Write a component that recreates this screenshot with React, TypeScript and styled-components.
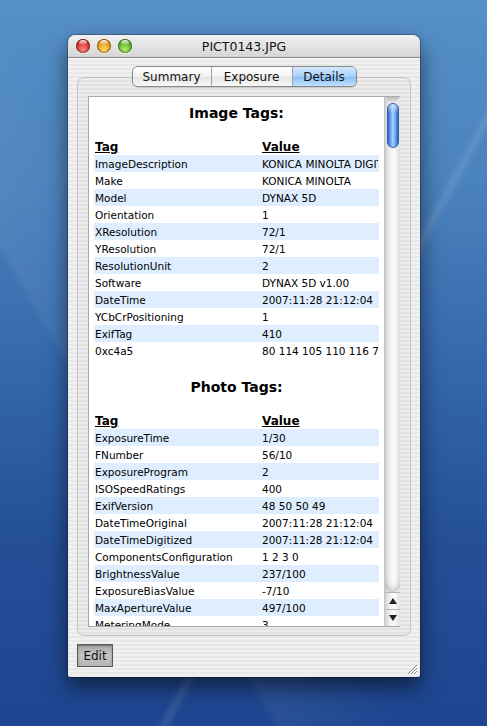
import React from 'react'
import styled, { createGlobalStyle } from 'styled-components'

const GlobalStyle = createGlobalStyle`
  * { box-sizing: border-box; }
  html, body { margin: 0; padding: 0; }
  body {
    font-family: "Lucida Grande", "DejaVu Sans", sans-serif;
    color: #000;
  }
`

const Desktop = styled.div`
  position: relative;
  min-height: 726px;
  padding: 35px 0 0 68px;
  overflow: hidden;
  background:
    linear-gradient(118deg, transparent 62%, rgba(255, 255, 255, 0.1) 63%, transparent 64%),
    linear-gradient(60deg, transparent 30%, rgba(255, 255, 255, 0.06) 31%, transparent 45%),
    linear-gradient(180deg, #5690c8 0%, #4a82bd 25%, #3468ad 50%, #244f97 75%, #1d4590 100%);
`

const Window = styled.div`
  position: relative;
  width: 352px;
  height: 642px;
  display: flex;
  flex-direction: column;
  border-radius: 7px 7px 2px 2px;
  overflow: hidden;
  box-shadow: 0 10px 22px rgba(0, 0, 0, 0.55), 0 0 0 1px rgba(0, 0, 0, 0.25);
`

const TitleBar = styled.div`
  flex-shrink: 0;
  height: 23px;
  display: grid;
  grid-template-columns: 1fr auto 1fr;
  align-items: center;
  padding: 0 8px;
  background:
    repeating-linear-gradient(180deg, rgba(255, 255, 255, 0.25) 0 1px, transparent 1px 2px),
    linear-gradient(180deg, #eeeeee 0%, #dedede 55%, #cfcfcf 100%);
  border-bottom: 1px solid #8c8c8c;
`

const Lights = styled.div`
  display: flex;
  gap: 7px;
`

const Light = styled.span<{ $c: string; $d: string }>`
  position: relative;
  width: 14px;
  height: 14px;
  border-radius: 50%;
  background: radial-gradient(circle at 50% 75%, ${p => p.$c} 0%, ${p => p.$d} 75%);
  box-shadow: inset 0 0 0 1px rgba(0, 0, 0, 0.35), 0 1px 1px rgba(255, 255, 255, 0.6);

  &::after {
    content: '';
    position: absolute;
    left: 3px;
    top: 1px;
    width: 8px;
    height: 5px;
    border-radius: 50%;
    background: linear-gradient(180deg, rgba(255, 255, 255, 0.9), rgba(255, 255, 255, 0.1));
  }
`

const Title = styled.div`
  font-size: 12.5px;
  color: #111;
  white-space: nowrap;
`

const Body = styled.div`
  flex: 1;
  min-height: 0;
  display: flex;
  flex-direction: column;
  padding: 8px 9px 10px;
  background: repeating-linear-gradient(180deg, #f1f1f1 0 2px, #e8e8e8 2px 4px);
`

const TabBar = styled.div`
  flex-shrink: 0;
  position: relative;
  z-index: 1;
  align-self: center;
  display: flex;
  height: 21px;
  border: 1px solid #888;
  border-radius: 6px;
  overflow: hidden;
  box-shadow: 0 1px 1px rgba(0, 0, 0, 0.15);
`

const Tab = styled.div<{ $active?: boolean; $w: number }>`
  width: ${p => p.$w}px;
  display: flex;
  align-items: center;
  justify-content: center;
  font-size: 12px;
  color: #111;
  border-left: 1px solid #a4a4a4;
  background: ${p =>
    p.$active
      ? 'linear-gradient(180deg, #d4e9fd 0%, #aed4fa 45%, #8cc1f6 55%, #bfe1fe 100%)'
      : 'linear-gradient(180deg, #ffffff 0%, #f4f4f4 45%, #e6e6e6 55%, #f7f7f7 100%)'};
  &:first-child {
    border-left: none;
  }
`

const GroupBox = styled.div`
  flex: 1;
  min-height: 0;
  margin-top: -10px;
  display: flex;
  padding: 18px 10px 8px;
  border: 1px solid #c2c2c2;
  border-radius: 7px;
  background: rgba(0, 0, 0, 0.025);
`

const Panel = styled.div`
  flex: 1;
  min-height: 0;
  display: flex;
  border: 1px solid #a9a9a9;
  border-right: none;
  background: #fff;
  overflow: hidden;
`

const Content = styled.div`
  flex: 1;
  overflow: hidden;
  padding: 6px 5px 0;
`

const Heading = styled.div<{ $first?: boolean }>`
  height: 20px;
  line-height: 20px;
  margin-top: ${p => (p.$first ? '0' : '18px')};
  margin-bottom: 15px;
  text-align: center;
  font-weight: bold;
  font-size: 14px;
`

const Row = styled.div<{ $striped?: boolean; $head?: boolean }>`
  display: grid;
  grid-template-columns: 167px 117px;
  height: 17px;
  align-items: center;
  white-space: nowrap;
  overflow: hidden;
  font-size: ${p => (p.$head ? '12px' : '10.5px')};
  font-weight: ${p => (p.$head ? 'bold' : 'normal')};
  background: ${p => (p.$striped ? '#deeeff' : 'transparent')};
  span {
    overflow: hidden;
    padding-left: 1px;
    text-decoration: ${p => (p.$head ? 'underline' : 'none')};
  }
`

const Scrollbar = styled.div`
  flex-shrink: 0;
  width: 16px;
  display: flex;
  flex-direction: column;
  border-left: 1px solid #c4c4c4;
  background: linear-gradient(90deg, #d2d2d2 0%, #eeeeee 30%, #fbfbfb 60%, #e2e2e2 100%);
`

const TrackCap = styled.div`
  flex-shrink: 0;
  height: 6px;
  background: linear-gradient(180deg, #bdbdbd, #e9e9e9);
  border-radius: 0 0 7px 7px;
  margin: 0 1px;
`

const Thumb = styled.div`
  flex-shrink: 0;
  height: 45px;
  margin: 0 1.5px;
  border-radius: 7px;
  border: 1px solid #2a5fae;
  background:
    linear-gradient(180deg, rgba(255, 255, 255, 0.55) 0%, rgba(255, 255, 255, 0) 22%),
    linear-gradient(90deg, #2f64c0 0%, #5d9ae8 22%, #a6d0fb 48%, #8bbff7 62%, #4b88dc 85%, #2d60bb 100%);
`

const Track = styled.div`
  flex: 1;
  border-radius: 0 0 7px 7px;
  box-shadow: inset 0 -6px 6px -3px rgba(0, 0, 0, 0.18);
`

const ArrowButton = styled.div<{ $down?: boolean }>`
  flex-shrink: 0;
  height: 17px;
  display: flex;
  align-items: center;
  justify-content: center;
  border-top: 1px solid #b4b4b4;
  &::before {
    content: '';
    border-left: 4px solid transparent;
    border-right: 4px solid transparent;
    ${p =>
      p.$down
        ? 'border-top: 6px solid #222;'
        : 'border-bottom: 6px solid #222;'}
  }
`

const Footer = styled.div`
  flex-shrink: 0;
  margin-top: 8px;
  display: flex;
`

const EditButton = styled.div`
  width: 36px;
  height: 23px;
  display: flex;
  align-items: center;
  justify-content: center;
  font-size: 12px;
  color: #111;
  border: 1px solid #5a5a5a;
  background: linear-gradient(180deg, #a9a9a9 0%, #c4c4c4 50%, #b6b6b6 100%);
  box-shadow: inset 0 1px 2px rgba(0, 0, 0, 0.35);
`

const Grip = styled.svg`
  position: absolute;
  right: 2px;
  bottom: 2px;
`

const imageTags: [string, string][] = [
  ['ImageDescription', 'KONICA MINOLTA DIGITAL CAMERA'],
  ['Make', 'KONICA MINOLTA'],
  ['Model', 'DYNAX 5D'],
  ['Orientation', '1'],
  ['XResolution', '72/1'],
  ['YResolution', '72/1'],
  ['ResolutionUnit', '2'],
  ['Software', 'DYNAX 5D v1.00'],
  ['DateTime', '2007:11:28 21:12:04'],
  ['YCbCrPositioning', '1'],
  ['ExifTag', '410'],
  ['0xc4a5', '80 114 105 110 116 73 77 0 48 50 53 48']
]

const photoTags: [string, string][] = [
  ['ExposureTime', '1/30'],
  ['FNumber', '56/10'],
  ['ExposureProgram', '2'],
  ['ISOSpeedRatings', '400'],
  ['ExifVersion', '48 50 50 49'],
  ['DateTimeOriginal', '2007:11:28 21:12:04'],
  ['DateTimeDigitized', '2007:11:28 21:12:04'],
  ['ComponentsConfiguration', '1 2 3 0'],
  ['BrightnessValue', '237/100'],
  ['ExposureBiasValue', '-7/10'],
  ['MaxApertureValue', '497/100'],
  ['MeteringMode', '3'],
  ['LightSource', '0'],
  ['Flash', '16']
]

function TagTable({ title, rows, first }: { title: string; rows: [string, string][]; first?: boolean }) {
  return (
    <>
      <Heading $first={first}>{title}</Heading>
      <Row $head>
        <span>Tag</span>
        <span>Value</span>
      </Row>
      {rows.map(([k, v], i) => (
        <Row key={k} $striped={i % 2 === 0}>
          <span>{k}</span>
          <span>{v}</span>
        </Row>
      ))}
    </>
  )
}

export default function App() {
  return (
    <Desktop>
      <GlobalStyle />
      <Window>
        <TitleBar>
          <Lights>
            <Light $c="#ff8a80" $d="#c01010" />
            <Light $c="#ffe066" $d="#d77a00" />
            <Light $c="#b8f070" $d="#3f9a10" />
          </Lights>
          <Title>PICT0143.JPG</Title>
          <span />
        </TitleBar>
        <Body>
          <TabBar>
            <Tab $w={78}>Summary</Tab>
            <Tab $w={81}>Exposure</Tab>
            <Tab $w={64} $active>
              Details
            </Tab>
          </TabBar>
          <GroupBox>
            <Panel>
              <Content>
                <TagTable title="Image Tags:" rows={imageTags} first />
                <TagTable title="Photo Tags:" rows={photoTags} />
              </Content>
              <Scrollbar>
                <TrackCap />
                <Thumb />
                <Track />
                <ArrowButton />
                <ArrowButton $down />
              </Scrollbar>
            </Panel>
          </GroupBox>
          <Footer>
            <EditButton>Edit</EditButton>
          </Footer>
        </Body>
        <Grip width="12" height="12" viewBox="0 0 12 12">
          <path d="M11 2 L2 11 M11 5 L5 11 M11 8 L8 11" stroke="#8a8a8a" strokeWidth="1" />
          <path d="M12 3 L3 12 M12 6 L6 12 M12 9 L9 12" stroke="#ffffff" strokeWidth="1" />
        </Grip>
      </Window>
    </Desktop>
  )
}
